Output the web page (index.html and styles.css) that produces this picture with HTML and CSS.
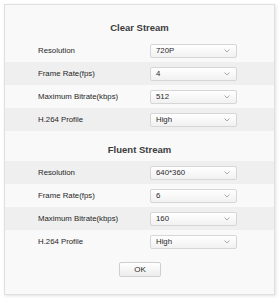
FILE: index.html
```html
<!DOCTYPE html>
<html>
<head>
<meta charset="utf-8">
<link rel="stylesheet" href="styles.css">
</head>
<body>
<div class="card">
  <section class="section">
    <h2 class="title">Clear Stream</h2>
    <div class="row"><span class="label">Resolution</span><div class="select"><span>720P</span><svg class="chev" width="6" height="4" viewBox="0 0 6 4"><polyline points="0.5,0.5 3,3 5.5,0.5" fill="none" stroke="#aaa" stroke-width="1"/></svg></div></div>
    <div class="row alt"><span class="label">Frame Rate(fps)</span><div class="select"><span>4</span><svg class="chev" width="6" height="4" viewBox="0 0 6 4"><polyline points="0.5,0.5 3,3 5.5,0.5" fill="none" stroke="#aaa" stroke-width="1"/></svg></div></div>
    <div class="row"><span class="label">Maximum Bitrate(kbps)</span><div class="select"><span>512</span><svg class="chev" width="6" height="4" viewBox="0 0 6 4"><polyline points="0.5,0.5 3,3 5.5,0.5" fill="none" stroke="#aaa" stroke-width="1"/></svg></div></div>
    <div class="row alt"><span class="label">H.264 Profile</span><div class="select"><span>High</span><svg class="chev" width="6" height="4" viewBox="0 0 6 4"><polyline points="0.5,0.5 3,3 5.5,0.5" fill="none" stroke="#aaa" stroke-width="1"/></svg></div></div>
  </section>
  <section class="section second">
    <h2 class="title">Fluent Stream</h2>
    <div class="row alt"><span class="label">Resolution</span><div class="select"><span>640*360</span><svg class="chev" width="6" height="4" viewBox="0 0 6 4"><polyline points="0.5,0.5 3,3 5.5,0.5" fill="none" stroke="#aaa" stroke-width="1"/></svg></div></div>
    <div class="row"><span class="label">Frame Rate(fps)</span><div class="select"><span>6</span><svg class="chev" width="6" height="4" viewBox="0 0 6 4"><polyline points="0.5,0.5 3,3 5.5,0.5" fill="none" stroke="#aaa" stroke-width="1"/></svg></div></div>
    <div class="row alt"><span class="label">Maximum Bitrate(kbps)</span><div class="select"><span>160</span><svg class="chev" width="6" height="4" viewBox="0 0 6 4"><polyline points="0.5,0.5 3,3 5.5,0.5" fill="none" stroke="#aaa" stroke-width="1"/></svg></div></div>
    <div class="row"><span class="label">H.264 Profile</span><div class="select"><span>High</span><svg class="chev" width="6" height="4" viewBox="0 0 6 4"><polyline points="0.5,0.5 3,3 5.5,0.5" fill="none" stroke="#aaa" stroke-width="1"/></svg></div></div>
  </section>
  <div class="actions"><button class="btn">OK</button></div>
</div>
</body>
</html>
```
FILE: styles.css
```css
html, body {
  margin: 0;
  padding: 0;
  background: #ffffff;
}
body {
  padding: 4px;
  font-family: "Liberation Sans", Arial, sans-serif;
  color: #333;
}
.card {
  width: 271px;
  height: 291px;
  box-sizing: border-box;
  background: #f9f9f9;
  border: 1px solid #e0e0e0;
  box-shadow: 1px 1px 3px rgba(0,0,0,0.12);
  padding-top: 15px;
}
.title {
  margin: 0 0 3px;
  font-size: 9.5px;
  line-height: 16px;
  font-weight: bold;
  text-align: center;
  color: #3c3c3c;
}
.second {
  margin-top: 11px;
}
.row {
  display: grid;
  grid-template-columns: 112px 87px;
  align-items: center;
  height: 23px;
  padding-left: 33px;
}
.row.alt {
  background: #efefef;
}
.label {
  font-size: 7.8px;
  color: #262626;
}
.select {
  height: 14px;
  box-sizing: border-box;
  border: 1px solid #d6d6d6;
  border-radius: 2px;
  background: linear-gradient(#ffffff, #f1f1f1);
  display: flex;
  align-items: center;
  justify-content: space-between;
  padding: 0 6px 0 5px;
  font-size: 7.8px;
  color: #2a2a2a;
}
.chev {
  display: block;
}
.actions {
  display: flex;
  justify-content: center;
  margin-top: 9px;
  padding-left: 1px;
}
.btn {
  width: 42px;
  height: 15px;
  padding: 0;
  border: 1px solid #cfcfcf;
  border-radius: 2px;
  background: linear-gradient(#ffffff, #ececec);
  font-family: "Liberation Sans", Arial, sans-serif;
  font-size: 8px;
  color: #2a2a2a;
}
```
